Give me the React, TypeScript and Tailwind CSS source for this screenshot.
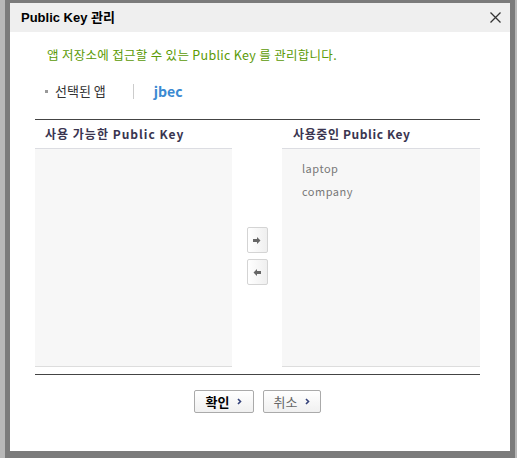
import React from 'react';

const font = { fontFamily: '"Noto Sans CJK KR", "Liberation Sans", sans-serif' };

const Chevron = () => (
  <svg width="5" height="7" viewBox="0 0 5 7" className="ml-[8px]">
    <path d="M1 1 L3.5 3.5 L1 6" stroke="#34427a" strokeWidth="1.6" fill="none" />
  </svg>
);

const ArrowBtn = ({ dir }: { dir: 'right' | 'left' }) => (
  <button className="w-[21px] h-[26px] shrink-0 border border-[#d4d4d4] rounded-[2px] bg-gradient-to-r from-white to-[#efefef] flex items-center justify-center">
    <svg width="8" height="7" viewBox="0 0 8 7">
      {dir === 'right' ? (
        <path d="M0 2 H4 V0 L7.5 3.5 L4 7 V5 H0 Z" fill="#666" />
      ) : (
        <path d="M8 2 H4 V0 L0.5 3.5 L4 7 V5 H8 Z" fill="#666" />
      )}
    </svg>
  </button>
);

export default function App() {
  const used = ['laptop', 'company'];

  return (
    <div className="w-[517px] h-[458px] bg-[#b8b8b8] flex pl-[5px] overflow-hidden" style={font}>
      <div className="w-[510px] h-[458px] bg-[#7b7b7b] pt-[3px] px-[5px]">
        <div className="w-[500px] h-[448px] bg-white flex flex-col">
          {/* Header */}
          <div className="h-[29px] bg-[#efefef] flex items-center justify-between pl-[11px] pr-[9px]">
            <span
              className="text-[13px] font-bold text-black"
              style={{ fontFamily: '"Liberation Sans", "Noto Sans CJK KR", sans-serif' }}
            >
              Public Key 관리
            </span>
            <svg width="11" height="11" viewBox="0 0 11 11">
              <path d="M0.5 0.5 L10.5 10.5 M10.5 0.5 L0.5 10.5" stroke="#333" strokeWidth="1.3" />
            </svg>
          </div>

          <div className="pl-[25px] pr-[30px] flex flex-col">
            <p className="mt-[15px] ml-[12px] text-[12.5px] leading-[16px] text-[#5b9a05] tracking-[0.3px]">
              앱 저장소에 접근할 수 있는 Public Key 를 관리합니다.
            </p>

            <div className="mt-[20px] ml-[10px] flex items-center h-[16px]">
              <span className="w-[3px] h-[3px] bg-[#999]" />
              <span className="ml-[7px] text-[13px] text-[#333]">선택된 앱</span>
              <span className="ml-[27px] w-px h-[15px] bg-[#ccc]" />
              <span className="ml-[20px] text-[14px] font-bold text-[#3b8ad2]">jbec</span>
            </div>

            {/* Lists */}
            <div className="mt-[20px] border-t border-[#444] grid grid-cols-[197px_50px_198px]">
              <div className="flex flex-col">
                <div className="h-[29px] flex items-center pl-[10px] border-b border-[#dcdde2] text-[12px] font-bold text-[#3a3550] tracking-[1px]">
                  사용 가능한 Public Key
                </div>
                <div className="h-[218px] bg-[#f7f7f7] border-b border-[#dddddd]" />
              </div>

              <div className="flex flex-col items-center justify-center gap-[6px] pt-[25px]">
                <ArrowBtn dir="right" />
                <ArrowBtn dir="left" />
              </div>

              <div className="flex flex-col">
                <div className="h-[29px] flex items-center pl-[11px] border-b border-[#dcdde2] text-[12px] font-bold text-[#3a3550] tracking-[0.6px]">
                  사용중인 Public Key
                </div>
                <div className="h-[218px] bg-[#f7f7f7] border-b border-[#dddddd] pl-[20px] pt-[8px]">
                  {used.map((k) => (
                    <div key={k} className="text-[11px] leading-[23px] text-[#777] tracking-[0.5px]">
                      {k}
                    </div>
                  ))}
                </div>
              </div>
            </div>

            <div className="mt-[7px] border-t border-[#444]" />

            <div className="mt-[15px] flex justify-center gap-[9px]">
              <button className="w-[60px] h-[23px] border border-[#aaa] rounded-[2px] bg-gradient-to-b from-white to-[#f0f0f0] flex items-center justify-center">
                <span className="text-[13px] font-bold text-black leading-none">확인</span>
                <Chevron />
              </button>
              <button className="w-[58px] h-[23px] border border-[#aaa] rounded-[2px] bg-gradient-to-b from-white to-[#f0f0f0] flex items-center justify-center">
                <span className="text-[13px] text-[#666] leading-none">취소</span>
                <Chevron />
              </button>
            </div>
          </div>
        </div>
      </div>
    </div>
  );
}
